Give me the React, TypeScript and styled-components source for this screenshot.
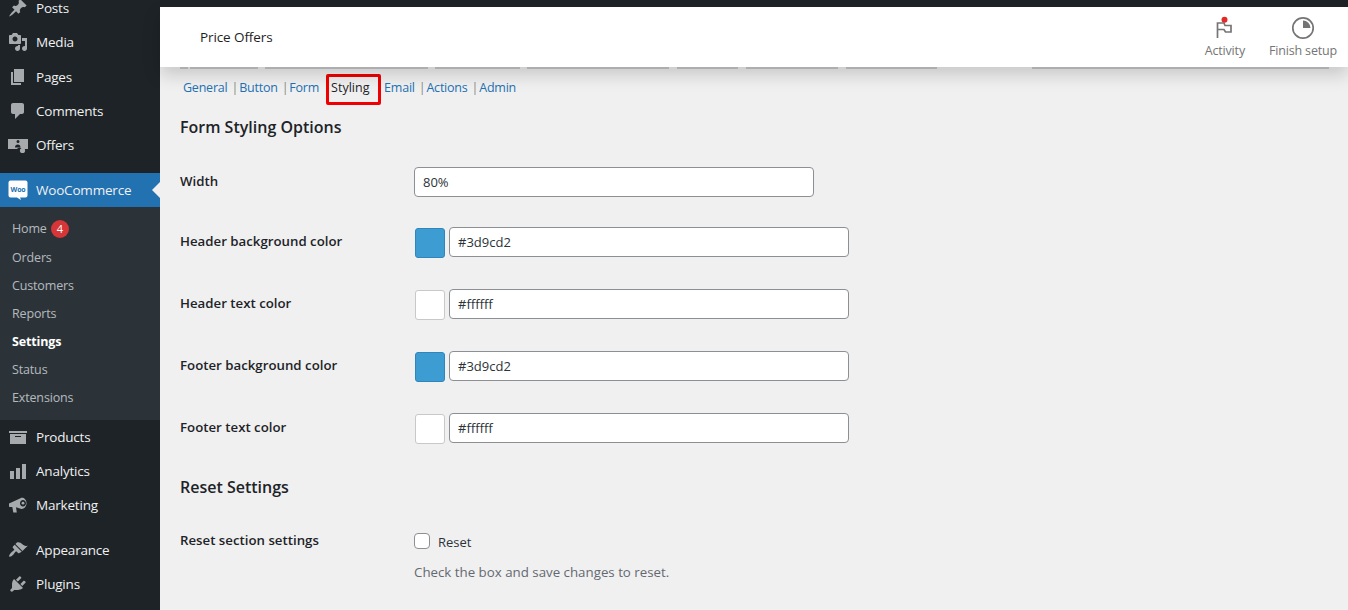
import React from 'react'
import styled, { createGlobalStyle } from 'styled-components'

const GlobalStyle = createGlobalStyle`
  html, body {
    margin: 0;
    height: 100%;
    overflow: hidden;
    background: #f0f0f1;
    font-family: "Open Sans", "Noto Sans", "Liberation Sans", sans-serif;
    font-size: 13px;
  }
`

const Page = styled.div`
  display: flex;
  width: 1348px;
  height: 610px;
  overflow: hidden;
`

// left admin menu
const Sidebar = styled.nav`
  width: 160px;
  flex: none;
  background: #1d2327;
  overflow: hidden;
`

const MenuList = styled.div`
  margin-top: -9px;
  display: flex;
  flex-direction: column;
`

const MenuItem = styled.div<{ $active?: boolean; $gap?: number }>`
  position: relative;
  display: flex;
  align-items: center;
  height: 34px;
  flex: none;
  margin-top: ${p => p.$gap || 0}px;
  padding-left: 8px;
  gap: 8px;
  color: #f0f0f1;
  font-size: 13.5px;
  letter-spacing: -0.2px;
  background: ${p => (p.$active ? '#2271b1' : 'transparent')};
  svg { width: 20px; height: 20px; fill: #a7aaad; flex: none; }
`

const ActiveArrow = styled.span`
  position: absolute;
  right: 0;
  top: 9px;
  border: 8px solid transparent;
  border-right-color: #f0f0f1;
  border-left-width: 0;
`

const SubMenu = styled.div`
  display: flex;
  flex-direction: column;
  background: #2c3338;
  padding: 7px 0 9px;
`

const SubItem = styled.div<{ $current?: boolean; $tall?: boolean }>`
  display: flex;
  align-items: center;
  height: ${p => (p.$tall ? 29 : 28)}px;
  padding-left: 12px;
  gap: 4px;
  font-size: 12.5px;
  letter-spacing: -0.15px;
  color: ${p => (p.$current ? '#fff' : 'rgba(240,246,252,.7)')};
  font-weight: ${p => (p.$current ? 700 : 400)};
`

const Badge = styled.span`
  width: 18px;
  height: 18px;
  border-radius: 50%;
  background: #d63638;
  color: #fff;
  font-size: 11px;
  display: flex;
  align-items: center;
  justify-content: center;
`

const Main = styled.main`
  flex: 1;
  min-width: 0;
  display: flex;
  flex-direction: column;
`

const AdminStrip = styled.div`
  height: 7px;
  flex: none;
  background: #1d2327;
`

// woocommerce header
const Header = styled.header`
  position: relative;
  z-index: 2;
  height: 60px;
  flex: none;
  display: flex;
  align-items: center;
  justify-content: space-between;
  padding-left: 40px;
  padding-right: 11px;
  background: #fff;
  box-shadow: 0 8px 16px rgba(0, 0, 0, 0.17);
`

const PageTitle = styled.div`
  font-size: 13.5px;
  color: #1e1e1e;
  letter-spacing: -0.1px;
`

const Actions = styled.div`
  display: flex;
  gap: 24px;
`

const ActionItem = styled.div`
  display: flex;
  flex-direction: column;
  align-items: center;
  gap: 2px;
  color: #757575;
  font-size: 12.5px;
  letter-spacing: -0.17px;
  svg { display: block; }
`

const TabEdge = styled.div`
  position: relative;
  z-index: 3;
  display: flex;
  height: 2px;
  flex: none;
  margin-left: 20px;
`

const EdgeSegment = styled.span<{ $w: number; $gap: number }>`
  width: ${p => p.$w}px;
  margin-right: ${p => p.$gap}px;
  background: #aeaeb0;
`

const Content = styled.div`
  padding-left: 20px;
  display: flex;
  flex-direction: column;
`

const Tabs = styled.div`
  display: flex;
  align-items: center;
  height: 32px;
  margin-top: 4px;
  padding-left: 3px;
  font-size: 12.5px;
  letter-spacing: -0.22px;
`

const TabLink = styled.span<{ $sep?: boolean; $ml: number }>`
  color: #2271b1;
  margin-left: ${p => p.$ml}px;
  margin-bottom: 4px;
  ${p => p.$sep && `
    &::before {
      content: '|';
      color: #8a8a80;
      margin-right: 1px;
    }
  `}
`

// red marker round the current tab
const CurrentTab = styled.span`
  box-sizing: border-box;
  width: 55px;
  height: 31px;
  margin-left: 7px;
  margin-right: 3px;
  display: flex;
  align-items: center;
  padding: 0 0 4px 2px;
  border: 3px solid #f00000;
  border-radius: 2px;
  color: #1d2327;
  letter-spacing: 0;
`

const SectionTitle = styled.h2<{ $top: number }>`
  margin: ${p => p.$top}px 0 0;
  font-size: 16px;
  line-height: 22px;
  font-weight: 600;
  color: #1d2327;
`

const FieldRow = styled.div<{ $top: number }>`
  display: flex;
  align-items: center;
  height: 30px;
  margin-top: ${p => p.$top}px;
`

const FieldLabel = styled.label`
  width: 234px;
  flex: none;
  margin-bottom: 2px;
  font-size: 13.25px;
  font-weight: 600;
  color: #1d2327;
`

const TextInput = styled.input`
  box-sizing: border-box;
  width: 400px;
  height: 30px;
  padding: 0 8px;
  border: 1px solid #8c8f94;
  border-radius: 4px;
  background: #fff;
  color: #2c3338;
  font: 13px "Open Sans", "Noto Sans", sans-serif;
  outline: none;
`

const Swatch = styled.span<{ $color: string }>`
  box-sizing: border-box;
  width: 30px;
  height: 30px;
  margin: 1px 4px 0 1px;
  border-radius: 3px;
  border: 1px solid ${p => (p.$color === '#ffffff' ? '#c8c8c8' : '#2f86bd')};
  background: ${p => p.$color};
`

const CheckBox = styled.input`
  appearance: none;
  box-sizing: border-box;
  width: 16px;
  height: 16px;
  margin: 0 8px 0 0;
  border: 1px solid #8c8f94;
  border-radius: 4px;
  background: #fff;
`

const CheckText = styled.span`
  margin-top: 1px;
  font-size: 13px;
  color: #2c3338;
`

const HelpText = styled.p`
  margin: 7px 0 0 234px;
  font-size: 13.3px;
  line-height: 18px;
  color: #646970;
`

const PinIcon = () => (
  <svg viewBox="0 0 20 20"><path d="M10.44 3.02l1.82-1.82 6.36 6.35-1.83 1.82c-1.05-.68-2.48-.57-3.41.36l-.75.75c-.92.93-1.04 2.35-.35 3.41l-1.83 1.82-2.41-2.41-2.8 2.79c-.42.42-3.38 2.71-3.8 2.29s1.86-3.39 2.28-3.81l2.79-2.79L4.1 9.36l1.83-1.82c1.05.69 2.48.57 3.4-.36l.75-.75c.93-.92 1.05-2.35.36-3.41z" /></svg>
)
const MediaIcon = () => (
  <svg viewBox="0 0 20 20"><path d="M13 11V4c0-.55-.45-1-1-1h-1.67L9 1H5L3.67 3H2c-.55 0-1 .45-1 1v7c0 .55.45 1 1 1h10c.55 0 1-.45 1-1zM7 4.5c1.38 0 2.5 1.12 2.5 2.5S8.38 9.5 7 9.5 4.5 8.38 4.5 7 5.62 4.5 7 4.5zM14 6h5v10.5c0 1.38-1.12 2.5-2.5 2.5S14 17.88 14 16.5s1.12-2.5 2.5-2.5c.17 0 .34.02.5.05V9h-3V6zm-4 8.05V13h2v3.5c0 1.38-1.12 2.5-2.5 2.5S7 17.88 7 16.5 8.12 14 9.5 14c.17 0 .34.02.5.05z" /></svg>
)
const PagesIcon = () => (
  <svg viewBox="0 0 20 20"><path d="M6 15V2h10v13H6zm-1 1h8v2H3V5h2v11z" /></svg>
)
const CommentIcon = () => (
  <svg viewBox="0 0 20 20"><path d="M5 2h9c1.1 0 2 .9 2 2v7c0 1.1-.9 2-2 2h-2l-5 5v-5H5c-1.1 0-2-.9-2-2V4c0-1.1.9-2 2-2z" /></svg>
)
const OffersIcon = () => (
  <svg viewBox="0 0 20 20">
    <path fillRule="evenodd" d="M0 4h20v10h-6a3 3 0 0 0-5 0H0V4zm8.5 2.5a1.5 1.5 0 1 0 3 0 1.500 1.500 0 0 0-3 0zM7 12.500h5.500c0-2-1-3-2.700-3S7 10.500 7 12.500z" />
    <circle cx="14.500" cy="15.500" r="2.600" />
  </svg>
)
const WooIcon = () => (
  <svg viewBox="0 0 20 20">
    <path style={{ fill: '#fff' }} d="M2.500 0.500h15a2 2 0 0 1 2 2v13a2 2 0 0 1-2 2H12l1 2.500-4-2.500H2.500a2 2 0 0 1-2-2v-13a2 2 0 0 1 2-2z" />
    <text x="10" y="11.500" textAnchor="middle" fontSize="7" fontWeight="700" fontFamily="Open Sans, sans-serif" style={{ fill: '#2271b1' }}>Woo</text>
  </svg>
)
const ProductsIcon = () => (
  <svg viewBox="0 0 20 20"><path d="M19 4v2H1V4h18zM2 7h16v10H2V7zm11 3V9H7v1h6z" /></svg>
)
const AnalyticsIcon = () => (
  <svg viewBox="0 0 20 20"><path d="M2 10h4v8H2zM8 7h4v11H8zM14 3h4v15h-4z" /></svg>
)
const MarketingIcon = () => (
  <svg viewBox="0 0 20 20">
    <path fillRule="evenodd" d="M1 8.500 12.500 3.200c2.300-1.300 6 .8 6 5 0 4-3.500 6.500-5.800 5.500L8 12.300l.8 5.200H5.300L4.300 12 2 12c-.6 0-1-.4-1-1V8.500zM15 5c-1.700 0-3 1.400-3 3.200s1.300 3.200 3 3.200 3-1.400 3-3.200S16.700 5 15 5z" />
    <circle cx="15" cy="8.200" r="1.400" />
  </svg>
)
const BrushIcon = () => (
  <svg viewBox="0 0 20 20"><path d="M14.480 11.060L7.410 3.990l1.500-1.500c.5-.56 2.300-.47 3.510.32 1.210.8 1.430 1.280 2.910 2.100 1.180.64 2.450 1.260 4.450.85zm-.71.71L6.700 4.700 4.930 6.470c-.39.39-.39 1.020 0 1.410l1.060 1.060c.39.39.39 1.030 0 1.420-.6.6-1.430 1.110-2.210 1.690-.35.26-.7.530-1.010.84-.95.95-2.200 3-1.500 3.700.7.700 2.750-.55 3.700-1.500.31-.31.580-.66.840-1.010.58-.78 1.090-1.610 1.690-2.210.39-.39 1.030-.39 1.420 0l1.060 1.060c.39.39 1.020.39 1.410 0z" /></svg>
)
const PluginIcon = () => (
  <svg viewBox="0 0 20 20"><path d="M13.110 4.360L9.870 7.600 8 5.730l3.240-3.240c.35-.34 1.050-.2 1.560.32.52.51.66 1.210.31 1.550zm-8 1.770l.91-1.120 9.010 9.010-1.190.84c-.71.71-2.630 1.160-3.820 1.160H6.140L4.900 17.260c-.59.59-1.540.59-2.120 0-.59-.58-.59-1.530 0-2.120l1.240-1.240v-3.880c0-1.130.4-3.190 1.090-3.890zm7.260 3.970l3.240-3.240c.34-.35 1.040-.21 1.550.31.52.51.66 1.210.31 1.550l-3.240 3.250z" /></svg>
)

const FlagIcon = () => (
  <svg width="24" height="24" viewBox="0 0 24 24" fill="none">
    <path d="M4.500 22V7h6.500l1 2.500h6v6.500h-5.500l-1.500-2.500H4.500" stroke="#757575" strokeWidth="1.700" />
    <circle cx="11.500" cy="3.800" r="3" fill="#e02b27" />
  </svg>
)
const ProgressIcon = () => (
  <svg width="24" height="24" viewBox="0 0 24 24" fill="none">
    <circle cx="12" cy="12" r="10.200" stroke="#757575" strokeWidth="1.700" />
    <path d="M12 4.500a7.500 7.500 0 0 1 7.500 7.500H12z" fill="#757575" />
  </svg>
)

const edgeSegments = [
  { w: 8, gap: 2 }, { w: 68, gap: 7 }, { w: 163, gap: 7 }, { w: 85, gap: 7 },
  { w: 142, gap: 8 }, { w: 61, gap: 8 }, { w: 92, gap: 8 }, { w: 91, gap: 95 },
  { w: 297, gap: 0 },
]

const colorFields = [
  { label: 'Header background color', value: '#3d9cd2' },
  { label: 'Header text color', value: '#ffffff' },
  { label: 'Footer background color', value: '#3d9cd2' },
  { label: 'Footer text color', value: '#ffffff' },
]

const App = () => (
  <Page>
    <GlobalStyle />
    <Sidebar>
      <MenuList>
        <MenuItem><PinIcon />Posts</MenuItem>
        <MenuItem><MediaIcon />Media</MenuItem>
        <MenuItem $gap={1}><PagesIcon />Pages</MenuItem>
        <MenuItem><CommentIcon />Comments</MenuItem>
        <MenuItem><OffersIcon />Offers</MenuItem>
        <MenuItem $active $gap={11}><WooIcon />WooCommerce<ActiveArrow /></MenuItem>
        <SubMenu>
          <SubItem $tall>Home <Badge>4</Badge></SubItem>
          <SubItem>Orders</SubItem>
          <SubItem>Customers</SubItem>
          <SubItem>Reports</SubItem>
          <SubItem $current>Settings</SubItem>
          <SubItem>Status</SubItem>
          <SubItem>Extensions</SubItem>
        </SubMenu>
        <MenuItem><ProductsIcon />Products</MenuItem>
        <MenuItem><AnalyticsIcon />Analytics</MenuItem>
        <MenuItem><MarketingIcon />Marketing</MenuItem>
        <MenuItem $gap={11}><BrushIcon />Appearance</MenuItem>
        <MenuItem><PluginIcon />Plugins</MenuItem>
      </MenuList>
    </Sidebar>
    <Main>
      <AdminStrip />
      <Header>
        <PageTitle>Price Offers</PageTitle>
        <Actions>
          <ActionItem><FlagIcon />Activity</ActionItem>
          <ActionItem><ProgressIcon />Finish setup</ActionItem>
        </Actions>
      </Header>
      <TabEdge>
        {edgeSegments.map((s, i) => <EdgeSegment key={i} $w={s.w} $gap={s.gap} />)}
      </TabEdge>
      <Content>
        <Tabs>
          <TabLink $ml={0}>General</TabLink>
          <TabLink $sep $ml={4}>Button</TabLink>
          <TabLink $sep $ml={4}>Form</TabLink>
          <CurrentTab>Styling</CurrentTab>
          <TabLink $ml={0}>Email</TabLink>
          <TabLink $sep $ml={4}>Actions</TabLink>
          <TabLink $sep $ml={4}>Admin</TabLink>
        </Tabs>
        <SectionTitle $top={11}>Form Styling Options</SectionTitle>
        <FieldRow $top={29}>
          <FieldLabel>Width</FieldLabel>
          <TextInput defaultValue="80%" />
        </FieldRow>
        {colorFields.map((f, i) => (
          <FieldRow key={f.label} $top={i === 0 ? 30 : 32}>
            <FieldLabel>{f.label}</FieldLabel>
            <Swatch $color={f.value} />
            <TextInput defaultValue={f.value} />
          </FieldRow>
        ))}
        <SectionTitle $top={33}>Reset Settings</SectionTitle>
        <FieldRow $top={28}>
          <FieldLabel>Reset section settings</FieldLabel>
          <CheckBox type="checkbox" />
          <CheckText>Reset</CheckText>
        </FieldRow>
        <HelpText>Check the box and save changes to reset.</HelpText>
      </Content>
    </Main>
  </Page>
)

export default App
